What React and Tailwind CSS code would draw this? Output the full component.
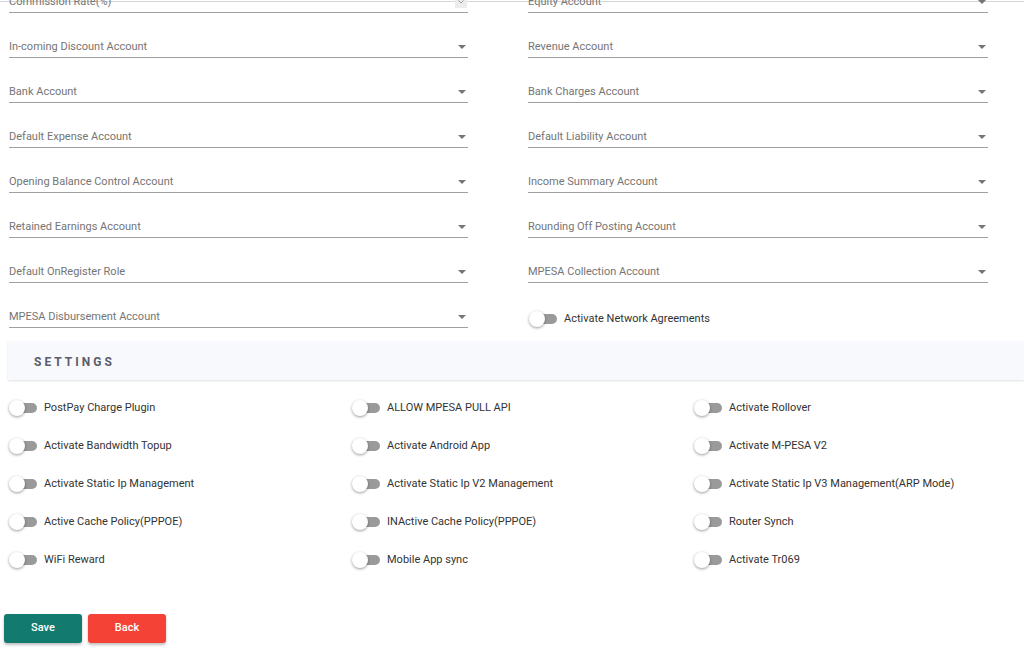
import React from 'react';

const leftFields = [
  'Commission Rate(%)',
  'In-coming Discount Account',
  'Bank Account',
  'Default Expense Account',
  'Opening Balance Control Account',
  'Retained Earnings Account',
  'Default OnRegister Role',
  'MPESA Disbursement Account',
];

const rightFields = [
  'Equity Account',
  'Revenue Account',
  'Bank Charges Account',
  'Default Liability Account',
  'Income Summary Account',
  'Rounding Off Posting Account',
  'MPESA Collection Account',
];

const settings = [
  ['PostPay Charge Plugin', 'ALLOW MPESA PULL API', 'Activate Rollover'],
  ['Activate Bandwidth Topup', 'Activate Android App', 'Activate M-PESA V2'],
  ['Activate Static Ip Management', 'Activate Static Ip V2 Management', 'Activate Static Ip V3 Management(ARP Mode)'],
  ['Active Cache Policy(PPPOE)', 'INActive Cache Policy(PPPOE)', 'Router Synch'],
  ['WiFi Reward', 'Mobile App sync', 'Activate Tr069'],
];

const Field = ({ label, number }) => (
  <div className="h-[45px] flex flex-col justify-end">
    <div className="flex items-center justify-between pb-[3px] border-b border-[#a0a0a0]">
      <span className="text-[11px] leading-[14px] text-[#757575]">{label}</span>
      {number ? (
        <span className="w-[12px] h-[12px] bg-[#ececec] flex items-center justify-center mr-[1px]">
          <svg width="6" height="4" viewBox="0 0 6 4"><path d="M0.5 0.5 L3 3 L5.5 0.5" stroke="#9e9e9e" fill="none" strokeWidth="1" /></svg>
        </span>
      ) : (
        <svg width="8" height="4" viewBox="0 0 8 4" className="mr-[2px]"><path d="M0 0 L8 0 L4 4 Z" fill="#757575" /></svg>
      )}
    </div>
  </div>
);

const Toggle = ({ label }) => (
  <div className="flex items-center gap-[7px]">
    <div className="relative w-[28px] h-[16px] flex items-center">
      <div className="absolute left-[4px] right-0 h-[10px] rounded-full bg-[#9a9a9a]" />
      <div className="absolute left-0 top-0 w-[16px] h-[16px] rounded-full bg-white shadow-[0_1px_3px_rgba(0,0,0,0.4)]" />
    </div>
    <span className="text-[11px] leading-[14px] text-[#333333]">{label}</span>
  </div>
);

export default function App() {
  return (
    <div className="w-[1024px] h-[649px] overflow-hidden bg-white font-['Roboto',_'Liberation_Sans',_sans-serif]">
      <div className="border-t border-[#d6d6d6] mt-[1px]" />
      <div className="-mt-[34px] pl-[9px] flex gap-[60px]">
        <div className="w-[459px]">
          {leftFields.map((f, i) => (
            <Field key={f} label={f} number={i === 0} />
          ))}
        </div>
        <div className="w-[460px]">
          {rightFields.map((f) => (
            <Field key={f} label={f} />
          ))}
          <div className="h-[45px] flex items-end pb-[1px]">
            <div className="pl-[1px]">
              <Toggle label="Activate Network Agreements" />
            </div>
          </div>
        </div>
      </div>

      <div className="ml-[8px] mt-[13px] h-[39px] bg-[#f8f9fc] shadow-[0_1px_2px_rgba(0,0,0,0.12)] flex items-center pl-[26px] pt-[2px]">
        <span className="text-[12px] font-bold tracking-[3px] text-[#5a5c69]">SETTINGS</span>
      </div>

      <div className="pl-[9px] mt-[20px] flex flex-col gap-[22px]">
        {settings.map((row, i) => (
          <div key={i} className="grid grid-cols-[343px_342px_330px]">
            {row.map((s) => (
              <Toggle key={s} label={s} />
            ))}
          </div>
        ))}
      </div>

      <div className="flex gap-[6px] pl-[4px] mt-[46px]">
        <button className="w-[78px] h-[29px] rounded-[3px] bg-[#137a6f] text-white text-[11px] font-medium shadow-[0_2px_3px_rgba(0,0,0,0.25)]">
          Save
        </button>
        <button className="w-[78px] h-[29px] rounded-[3px] bg-[#f44336] text-white text-[11px] font-medium shadow-[0_2px_3px_rgba(0,0,0,0.25)]">
          Back
        </button>
      </div>
    </div>
  );
}
